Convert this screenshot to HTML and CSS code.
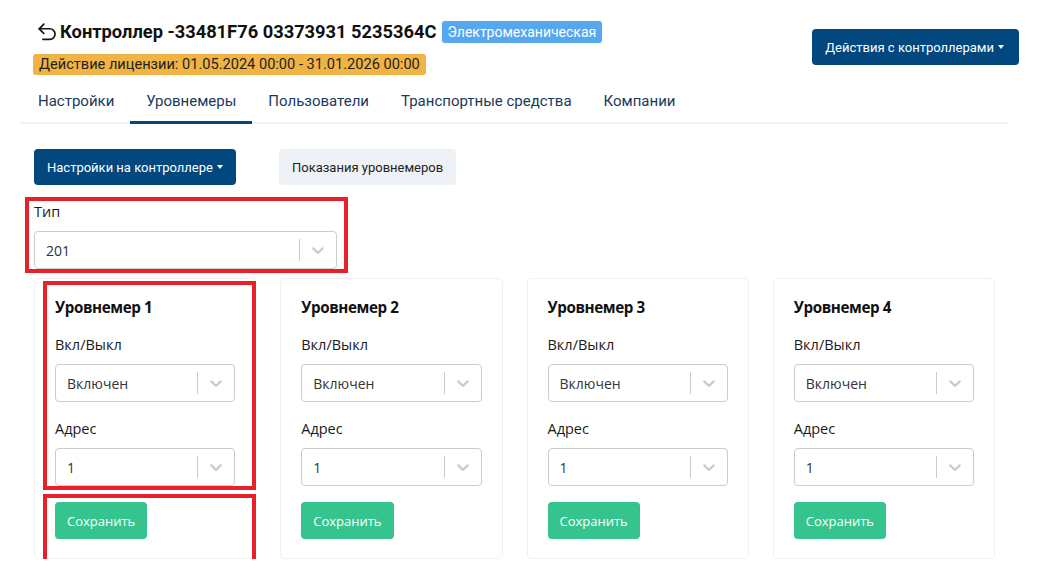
FILE: index.html
```html
<!DOCTYPE html>
<html lang="ru">
<head>
    <meta charset="UTF-8">
    <meta name="viewport" content="width=device-width, initial-scale=1.0">
    <title>Контроллер</title>
    <link rel="stylesheet" href="styles.css">
</head>
<body>
<div class="page">
    <div class="header">
        <div class="header-info">
            <div class="title-row">
                <svg class="back-icon" viewBox="0 0 24 24" width="22" height="22">
                    <path d="M8.5 3.5 L3.5 8.5 L8.5 13.5" fill="none" stroke="#111" stroke-width="1.8" stroke-linecap="round" stroke-linejoin="round"/>
                    <path d="M3.5 8.5 H15 A5.8 5.8 0 0 1 15 20.1 H7.5" fill="none" stroke="#111" stroke-width="1.8" stroke-linecap="round"/>
                </svg>
                <h1 class="title">Контроллер -33481F76 03373931 5235364C</h1>
                <span class="badge badge-blue">Электромеханическая</span>
            </div>
            <span class="badge badge-orange">Действие лицензии: 01.05.2024 00:00 - 31.01.2026 00:00</span>
        </div>
        <button class="btn btn-dark btn-actions">Действия с контроллерами<span class="caret"></span></button>
    </div>

    <div class="tabs">
        <a class="tab">Настройки</a>
        <a class="tab active">Уровнемеры</a>
        <a class="tab">Пользователи</a>
        <a class="tab">Транспортные средства</a>
        <a class="tab">Компании</a>
    </div>

    <div class="content">
        <div class="toolbar">
            <button class="btn btn-dark">Настройки на контроллере<span class="caret"></span></button>
            <button class="btn btn-light">Показания уровнемеров</button>
        </div>

        <div class="type-field">
            <label class="field-label">Тип</label>
            <div class="select">
                <span class="select-value">201</span>
                <span class="select-sep"></span>
                <svg class="select-arrow" viewBox="0 0 20 20" width="20" height="20"><path d="M4.516 7.548c0.436-0.446 1.043-0.481 1.576 0l3.908 3.747 3.908-3.747c0.533-0.481 1.141-0.446 1.574 0 0.436 0.445 0.408 1.197 0 1.615-0.406 0.418-4.695 4.502-4.695 4.502-0.217 0.223-0.502 0.335-0.787 0.335s-0.57-0.112-0.789-0.335c0 0-4.287-4.084-4.695-4.502s-0.436-1.170 0-1.615z"/></svg>
            </div>
        </div>

        <div class="cards">
            <div class="card">
                <h3 class="card-title">Уровнемер 1</h3>
                <label class="field-label">Вкл/Выкл</label>
                <div class="select">
                    <span class="select-value">Включен</span>
                    <span class="select-sep"></span>
                    <svg class="select-arrow" viewBox="0 0 20 20" width="20" height="20"><path d="M4.516 7.548c0.436-0.446 1.043-0.481 1.576 0l3.908 3.747 3.908-3.747c0.533-0.481 1.141-0.446 1.574 0 0.436 0.445 0.408 1.197 0 1.615-0.406 0.418-4.695 4.502-4.695 4.502-0.217 0.223-0.502 0.335-0.787 0.335s-0.57-0.112-0.789-0.335c0 0-4.287-4.084-4.695-4.502s-0.436-1.170 0-1.615z"/></svg>
                </div>
                <label class="field-label field-gap">Адрес</label>
                <div class="select">
                    <span class="select-value">1</span>
                    <span class="select-sep"></span>
                    <svg class="select-arrow" viewBox="0 0 20 20" width="20" height="20"><path d="M4.516 7.548c0.436-0.446 1.043-0.481 1.576 0l3.908 3.747 3.908-3.747c0.533-0.481 1.141-0.446 1.574 0 0.436 0.445 0.408 1.197 0 1.615-0.406 0.418-4.695 4.502-4.695 4.502-0.217 0.223-0.502 0.335-0.787 0.335s-0.57-0.112-0.789-0.335c0 0-4.287-4.084-4.695-4.502s-0.436-1.170 0-1.615z"/></svg>
                </div>
                <button class="btn btn-green">Сохранить</button>
            </div>
            <div class="card">
                <h3 class="card-title">Уровнемер 2</h3>
                <label class="field-label">Вкл/Выкл</label>
                <div class="select">
                    <span class="select-value">Включен</span>
                    <span class="select-sep"></span>
                    <svg class="select-arrow" viewBox="0 0 20 20" width="20" height="20"><path d="M4.516 7.548c0.436-0.446 1.043-0.481 1.576 0l3.908 3.747 3.908-3.747c0.533-0.481 1.141-0.446 1.574 0 0.436 0.445 0.408 1.197 0 1.615-0.406 0.418-4.695 4.502-4.695 4.502-0.217 0.223-0.502 0.335-0.787 0.335s-0.57-0.112-0.789-0.335c0 0-4.287-4.084-4.695-4.502s-0.436-1.170 0-1.615z"/></svg>
                </div>
                <label class="field-label field-gap">Адрес</label>
                <div class="select">
                    <span class="select-value">1</span>
                    <span class="select-sep"></span>
                    <svg class="select-arrow" viewBox="0 0 20 20" width="20" height="20"><path d="M4.516 7.548c0.436-0.446 1.043-0.481 1.576 0l3.908 3.747 3.908-3.747c0.533-0.481 1.141-0.446 1.574 0 0.436 0.445 0.408 1.197 0 1.615-0.406 0.418-4.695 4.502-4.695 4.502-0.217 0.223-0.502 0.335-0.787 0.335s-0.57-0.112-0.789-0.335c0 0-4.287-4.084-4.695-4.502s-0.436-1.170 0-1.615z"/></svg>
                </div>
                <button class="btn btn-green">Сохранить</button>
            </div>
            <div class="card">
                <h3 class="card-title">Уровнемер 3</h3>
                <label class="field-label">Вкл/Выкл</label>
                <div class="select">
                    <span class="select-value">Включен</span>
                    <span class="select-sep"></span>
                    <svg class="select-arrow" viewBox="0 0 20 20" width="20" height="20"><path d="M4.516 7.548c0.436-0.446 1.043-0.481 1.576 0l3.908 3.747 3.908-3.747c0.533-0.481 1.141-0.446 1.574 0 0.436 0.445 0.408 1.197 0 1.615-0.406 0.418-4.695 4.502-4.695 4.502-0.217 0.223-0.502 0.335-0.787 0.335s-0.57-0.112-0.789-0.335c0 0-4.287-4.084-4.695-4.502s-0.436-1.170 0-1.615z"/></svg>
                </div>
                <label class="field-label field-gap">Адрес</label>
                <div class="select">
                    <span class="select-value">1</span>
                    <span class="select-sep"></span>
                    <svg class="select-arrow" viewBox="0 0 20 20" width="20" height="20"><path d="M4.516 7.548c0.436-0.446 1.043-0.481 1.576 0l3.908 3.747 3.908-3.747c0.533-0.481 1.141-0.446 1.574 0 0.436 0.445 0.408 1.197 0 1.615-0.406 0.418-4.695 4.502-4.695 4.502-0.217 0.223-0.502 0.335-0.787 0.335s-0.57-0.112-0.789-0.335c0 0-4.287-4.084-4.695-4.502s-0.436-1.170 0-1.615z"/></svg>
                </div>
                <button class="btn btn-green">Сохранить</button>
            </div>
            <div class="card">
                <h3 class="card-title">Уровнемер 4</h3>
                <label class="field-label">Вкл/Выкл</label>
                <div class="select">
                    <span class="select-value">Включен</span>
                    <span class="select-sep"></span>
                    <svg class="select-arrow" viewBox="0 0 20 20" width="20" height="20"><path d="M4.516 7.548c0.436-0.446 1.043-0.481 1.576 0l3.908 3.747 3.908-3.747c0.533-0.481 1.141-0.446 1.574 0 0.436 0.445 0.408 1.197 0 1.615-0.406 0.418-4.695 4.502-4.695 4.502-0.217 0.223-0.502 0.335-0.787 0.335s-0.57-0.112-0.789-0.335c0 0-4.287-4.084-4.695-4.502s-0.436-1.170 0-1.615z"/></svg>
                </div>
                <label class="field-label field-gap">Адрес</label>
                <div class="select">
                    <span class="select-value">1</span>
                    <span class="select-sep"></span>
                    <svg class="select-arrow" viewBox="0 0 20 20" width="20" height="20"><path d="M4.516 7.548c0.436-0.446 1.043-0.481 1.576 0l3.908 3.747 3.908-3.747c0.533-0.481 1.141-0.446 1.574 0 0.436 0.445 0.408 1.197 0 1.615-0.406 0.418-4.695 4.502-4.695 4.502-0.217 0.223-0.502 0.335-0.787 0.335s-0.57-0.112-0.789-0.335c0 0-4.287-4.084-4.695-4.502s-0.436-1.170 0-1.615z"/></svg>
                </div>
                <button class="btn btn-green">Сохранить</button>
            </div>
        </div>
    </div>

    <!-- красные рамки-пометки поверх скриншота -->
    <div class="mark mark-type"></div>
    <div class="mark mark-fields"></div>
    <div class="mark mark-save"></div>
</div>
</body>
</html>
```

FILE: styles.css
```css
body {
    margin: 0;
    background: #fff;
    font-family: Roboto, "Open Sans", Arial, sans-serif;
    color: #111;
}
.page {
    position: relative;
    width: 999px;
    margin-left: 20px;
}
.header {
    display: flex;
    justify-content: space-between;
    align-items: flex-start;
    padding: 20px 0 0 16px;
    height: 56px;
}
.header-info {
    display: flex;
    flex-direction: column;
    align-items: flex-start;
    gap: 10px;
}
.title-row {
    display: flex;
    align-items: center;
    height: 24px;
}
.back-icon {
    margin-right: 2px;
}
.title {
    margin: 0 5px 0 0;
    font-size: 18.3px;
    font-weight: 700;
    line-height: 24px;
}
.badge {
    display: inline-block;
    border-radius: 3px;
    font-size: 14px;
    line-height: 21px;
    padding: 0 6px;
}
.badge-blue {
    background: #55a7ef;
    color: #fff;
    height: 22px;
    line-height: 22px;
}
.badge-orange {
    background: #f0b344;
    color: #222;
    font-size: 14.6px;
    margin-left: -3px;
}
.btn {
    border: none;
    border-radius: 4px;
    font-family: Roboto, Arial, sans-serif;
    font-size: 13px;
    cursor: pointer;
    height: 36px;
    padding: 0 13px;
}
.btn-dark {
    background: #02487f;
    color: #fff;
}
.btn-actions {
    margin-top: 9px;
    padding: 0 15px 0 13px;
}
.btn-light {
    background: #eef1f6;
    color: #222;
}
.btn-green {
    background: #35c48e;
    color: #fff;
    font-family: "Open Sans", Arial, sans-serif;
    height: 37px;
    padding: 0 12px;
    margin-top: 16px;
}
.caret {
    display: inline-block;
    margin-left: 4px;
    vertical-align: 3px;
    border-top: 4px solid #fff;
    border-left: 3.5px solid transparent;
    border-right: 3.5px solid transparent;
}
.tabs {
    display: flex;
    margin: 9px 12px 0 0;
    padding-left: 2px;
    border-bottom: 2px solid #f0f1f3;
}
.tab {
    display: block;
    padding: 0 16px;
    height: 36px;
    line-height: 33px;
    font-size: 15px;
    color: #19395a;
    margin-bottom: -2px;
}
.tab.active {
    border-bottom: 3px solid #02487f;
}
.content {
    padding: 25px 0 0 14px;
}
.toolbar {
    display: flex;
    gap: 43px;
}
.type-field {
    width: 303px;
    margin-top: 17px;
}
.field-label {
    display: block;
    font-family: "Open Sans", Arial, sans-serif;
    font-size: 14.5px;
    line-height: 20px;
    color: #1a1a1a;
    margin-bottom: 9px;
}
.field-gap {
    margin-top: 17px;
}
.select {
    display: flex;
    align-items: center;
    height: 38px;
    box-sizing: border-box;
    border: 1px solid #cccccc;
    border-radius: 4px;
    background: #fff;
}
.select-value {
    flex: 1;
    padding-left: 11px;
    font-family: "Open Sans", Arial, sans-serif;
    font-size: 14px;
    color: #333;
}
.select-sep {
    width: 1px;
    height: 22px;
    background: #cccccc;
}
.select-arrow {
    fill: #cccccc;
    margin: 0 8px;
}
.cards {
    display: grid;
    grid-template-columns: repeat(4, 1fr);
    gap: 24px;
    width: 961px;
    margin-top: 9px;
}
.card {
    display: flex;
    flex-direction: column;
    align-items: flex-start;
    border: 1px solid #eef0f3;
    border-radius: 5px;
    padding: 18px 20px 19px;
}
.card .select {
    width: 100%;
}
.card-title {
    margin: 0 0 18px;
    font-family: "Open Sans", Arial, sans-serif;
    font-size: 15.2px;
    font-weight: 700;
    line-height: 20px;
    letter-spacing: -0.4px;
}
.mark {
    position: absolute;
    border: 4px solid #e8202a;
    box-sizing: border-box;
}
.mark-type {
    left: 5px;
    top: 197px;
    width: 323px;
    height: 76px;
}
.mark-fields {
    left: 23px;
    top: 281px;
    width: 213px;
    height: 209px;
}
.mark-save {
    left: 23px;
    top: 494px;
    width: 213px;
    height: 70px;
}
```
